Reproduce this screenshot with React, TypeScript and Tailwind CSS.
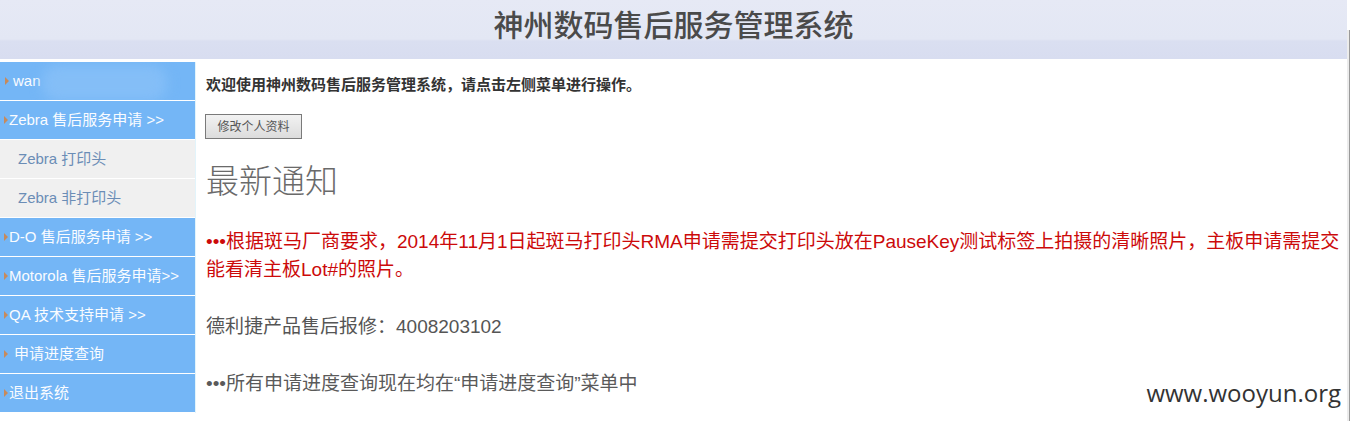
import React from "react";

const SANS = "font-['Liberation_Sans','Noto_Sans_CJK_SC',sans-serif]";

type MenuItem = { label: string; sub?: boolean; gap?: boolean };

const MENU: MenuItem[] = [
    { label: "Zebra 售后服务申请 >>" },
    { label: "Zebra 打印头", sub: true },
    { label: "Zebra 非打印头", sub: true },
    { label: "D-O 售后服务申请 >>" },
    { label: "Motorola 售后服务申请>>" },
    { label: "QA 技术支持申请 >>" },
    { label: "申请进度查询", gap: true },
    { label: "退出系统" },
];

function Arrow() {
    return (
        <svg width="4" height="8" viewBox="0 0 4 8" className="shrink-0">
            <path d="M0 0 L4 4 L0 8 Z" fill="#c68a5c" />
        </svg>
    );
}

function SideItem({ item }: { item: MenuItem }) {
    if (item.sub) {
        return (
            <div className="h-[38px] mb-px bg-[#f0f0f0] flex items-center pl-[18px] text-[15px] text-[#6b8db6]">
                {item.label}
            </div>
        );
    }
    return (
        <div className="h-[38px] mb-px bg-[#74b6f6] flex items-center pl-[4px] text-[15px] text-[#fafcff]">
            <Arrow />
            <span className={item.gap ? "ml-[6px]" : "ml-[1px]"}>{item.label}</span>
        </div>
    );
}

export default function App() {
    return (
        <div className={`relative w-[1351px] h-[421px] overflow-hidden bg-white flex ${SANS}`}>
            <div className="w-[1347px] flex flex-col">
                {/* Header */}
                <div className="h-[59px] bg-[linear-gradient(#e6e9f5_0px,#e3e7f4_39px,#dadff1_41px,#d8ddf0_59px)] flex items-start justify-center pt-[6px]">
                    <h1 className="text-[30px] leading-[40px] font-medium text-[#4a4a4a]">
                        神州数码售后服务管理系统
                    </h1>
                </div>

                <div className="flex mt-[3px]">
                    {/* Sidebar */}
                    <div className="w-[195px] shrink-0 flex flex-col">
                        <div className="relative h-[38px] mb-px bg-[#74b6f6] flex items-center pl-[5px] text-[15px] text-[#fafcff] overflow-hidden">
                            <Arrow />
                            <span className="ml-[4px]">wan</span>
                            <div className="absolute left-[42px] top-[3px] w-[125px] h-[36px] rounded-[16px] bg-[#84bef7] blur-[6px]" />
                        </div>
                        {MENU.map((item) => (
                            <SideItem key={item.label} item={item} />
                        ))}
                    </div>

                    {/* Main */}
                    <div className="flex-1 border-l border-[#e2f4fb] pl-[10px] pt-[13px] flex flex-col items-start">
                        <p className="text-[15px] leading-[20px] font-bold text-[#333]">
                            欢迎使用神州数码售后服务管理系统，请点击左侧菜单进行操作。
                        </p>
                        <button className="mt-[19px] -ml-px w-[97px] h-[25px] border border-[#7a7a7a] bg-[linear-gradient(#f2f2f2,#dcdcdc)] text-[12px] text-[#555]">
                            修改个人资料
                        </button>
                        <h2 className="mt-[23px] text-[33px] leading-[40px] font-light text-[#6a6a6a] font-['Liberation_Serif','Noto_Sans_CJK_SC',serif]">
                            最新通知
                        </h2>
                        <p className="mt-[26px] text-[19px] leading-[28px] text-[#cc0a0a] whitespace-nowrap">
                            •••根据斑马厂商要求，2014年11月1日起斑马打印头RMA申请需提交打印头放在PauseKey测试标签上拍摄的清晰照片，主板申请需提交
                            <br />
                            能看清主板Lot#的照片。
                        </p>
                        <p className="mt-[29px] text-[19px] leading-[28px] text-[#555]">
                            德利捷产品售后报修：4008203102
                        </p>
                        <p className="mt-[29px] text-[19px] leading-[28px] text-[#5a5a5a]">
                            •••所有申请进度查询现在均在“申请进度查询”菜单中
                        </p>
                    </div>
                </div>
            </div>

            {/* window edge */}
            <div className="flex-1 pt-[30px] flex">
                <div className="w-[2px] bg-[#ececec]" />
                <div className="w-px bg-[#9a9a9a]" />
            </div>

            {/* watermark */}
            <div className="absolute right-[10px] top-[377px] text-[24px] leading-[32px] text-[#333] font-['Open_Sans',sans-serif]">
                www.wooyun.org
            </div>
        </div>
    );
}
